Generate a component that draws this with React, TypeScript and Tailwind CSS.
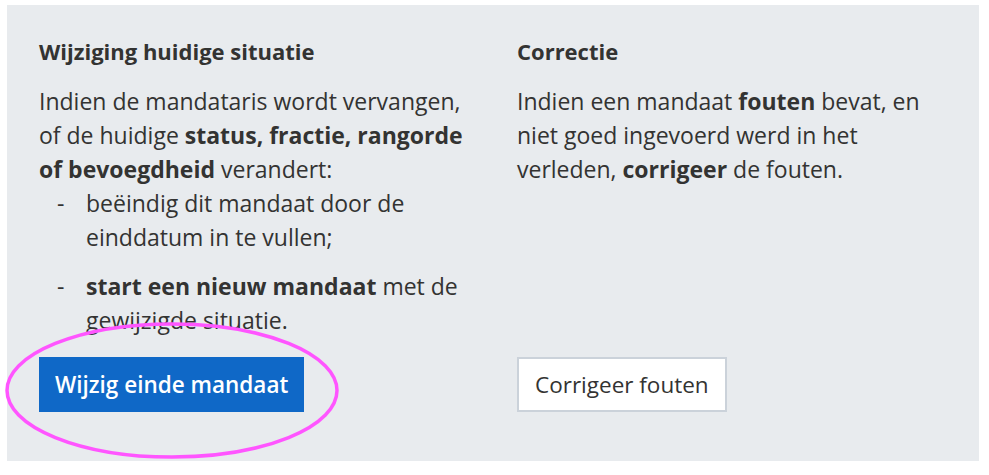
export default function App() {
  return (
    <div className="relative w-[989px] h-[475px] bg-white font-['Open_Sans',sans-serif] text-[#333332]">
      <div className="ml-[7px] mt-[5px] w-[972px] h-[456px] bg-[#e8ebee] px-[32px] pt-[31px] pb-[49px] grid grid-cols-2 gap-x-[48px]">
        {/* Left column */}
        <div className="flex flex-col">
          <h2 className="text-[22px] leading-[30px] font-bold">Wijziging huidige situatie</h2>
          <p className="mt-[18px] text-[23px] leading-[34px]">
            Indien de mandataris wordt vervangen, of de huidige <strong>status, fractie, rangorde of bevoegdheid</strong> verandert:
          </p>
          <ul className="text-[23px] leading-[34px] space-y-[15px]">
            <li className="flex">
              <span className="w-[47px] pl-[18px] shrink-0">-</span>
              <span>beëindig dit mandaat door de einddatum in te vullen;</span>
            </li>
            <li className="flex">
              <span className="w-[47px] pl-[18px] shrink-0">-</span>
              <span>
                <strong>start een nieuw mandaat</strong> met de gewijzigde situatie.
              </span>
            </li>
          </ul>
          <div className="mt-auto">
            <button className="h-[55px] px-[16px] bg-[#0f68c7] text-white text-[22.5px] font-semibold">
              Wijzig einde mandaat
            </button>
          </div>
        </div>

        {/* Right column */}
        <div className="flex flex-col">
          <h2 className="text-[22px] leading-[30px] font-bold">Correctie</h2>
          <p className="mt-[18px] text-[23px] leading-[34px]">
            Indien een mandaat <strong>fouten</strong> bevat, en niet goed ingevoerd werd in het verleden, <strong>corrigeer</strong> de fouten.
          </p>
          <div className="mt-auto">
            <button className="h-[55px] px-[16px] bg-white border-2 border-[#cbd2da] text-[22.5px]">
              Corrigeer fouten
            </button>
          </div>
        </div>
      </div>

      {/* annotation ring */}
      <svg className="absolute left-0 top-0 pointer-events-none" width="989" height="475">
        <ellipse cx="172" cy="385.5" rx="165" ry="66.5" fill="none" stroke="#ff55ff" strokeWidth="3.5" />
      </svg>
    </div>
  );
}
